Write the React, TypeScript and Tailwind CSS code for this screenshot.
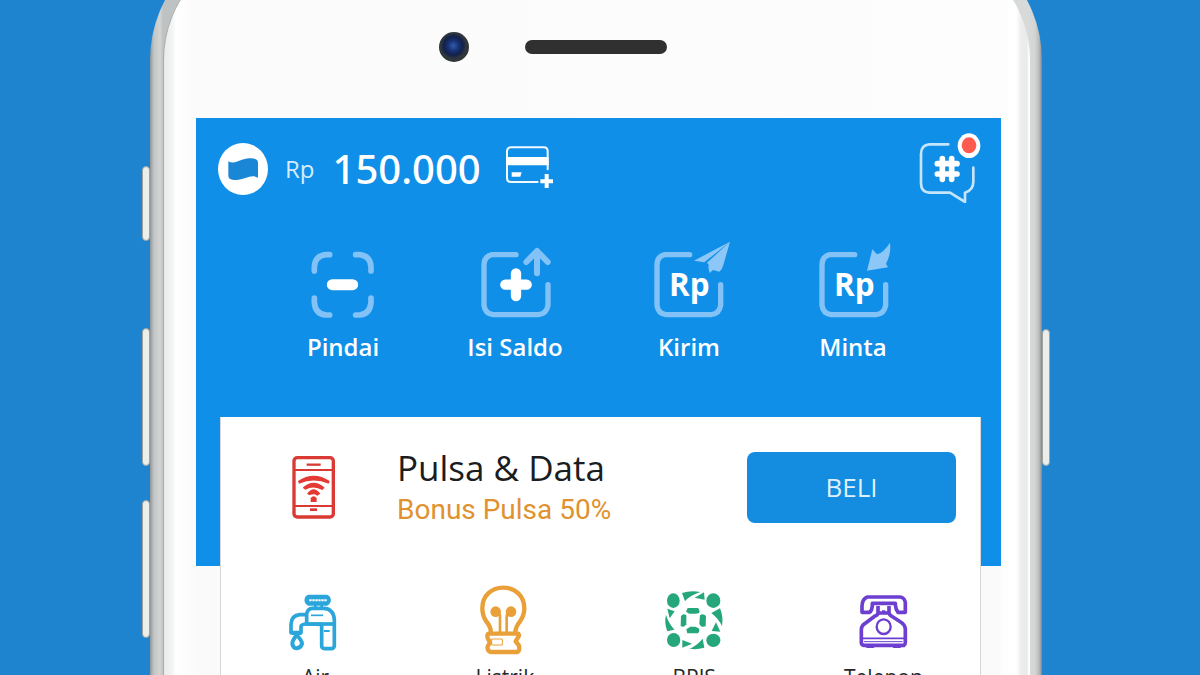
import type { ReactNode } from "react";

const svgBase = "block overflow-visible";

function LogoIcon() {
  return (
    <svg viewBox="0 0 150 156" className="h-[52px] w-[50px]" aria-hidden="true">
      <ellipse cx="75" cy="78" rx="75" ry="78" fill="#fff" />
      <path
        d="M31 55 C52 67 72 44 97 46 Q112 46 117 51 Q120 54 120 60 V104 C99 92 80 111 55 111 Q38 111 33 105 Q31 101 31 96 Z"
        fill="#1a86d6"
      />
    </svg>
  );
}

function AddCardIcon() {
  return (
    <svg viewBox="918 76 144 126" className="h-[42px] w-12" fill="none" aria-hidden="true">
      <path
        d="M1046 146 V92 Q1046 80 1034 80 H936 Q924 80 924 92 V172 Q924 184 936 184 H1016"
        stroke="#f3faff"
        strokeWidth="6"
        strokeLinecap="round"
      />
      <path d="M921 109 H1049 V134 H921 Z" fill="#fff" />
      <path d="M938 155 H968 L964 168 H938 Z" fill="#fff" />
      <path d="M1043 160 V202 M1024 182 H1062" stroke="#fff" strokeWidth="12" />
    </svg>
  );
}

function ChatIcon() {
  return (
    <svg viewBox="117 69 186 210" className="h-[70px] w-[62px]" fill="none" aria-hidden="true">
      <path
        d="M205 103 H148 Q123 105 123 132 V220 Q123 247 148 248 H210 L255 276 V248 Q280 240 280 215 V173"
        stroke="#c6e5fb"
        strokeWidth="8"
        strokeLinecap="round"
        strokeLinejoin="round"
      />
      <path
        d="M187 146 V208 M215 146 V208 M172 161 H231 M172 192 H231"
        stroke="#fff"
        strokeWidth="17"
        strokeLinecap="round"
      />
      <ellipse cx="267" cy="107" rx="34" ry="37" fill="#fff" />
      <ellipse cx="267" cy="106" rx="22" ry="24" fill="#ff5a4f" />
    </svg>
  );
}

function ActionSvg({ viewBox, children }: { viewBox: string; children: ReactNode }) {
  return (
    <svg viewBox={viewBox} className={`${svgBase} size-20`} fill="none" strokeLinecap="round" strokeLinejoin="round" aria-hidden="true">
      {children}
    </svg>
  );
}

function ScanIcon() {
  return (
    <ActionSvg viewBox="39 30 240 240">
      <path
        d="M119 74 H108 Q73 78 73 112 V123 M197 74 H208 Q243 78 243 112 V123 M73 204 V216 Q75 252 108 255 H119 M243 204 V216 Q241 252 208 255 H197"
        stroke="#83c2f6"
        strokeWidth="17"
      />
      <path d="M127 164 H188" stroke="#fff" strokeWidth="33" />
    </ActionSvg>
  );
}

function TopUpIcon() {
  return (
    <ActionSvg viewBox="555 30 240 240">
      <path
        d="M678 74 H606 Q582 79 582 106 V226 Q585 250 609 254 H745 Q770 251 774 226 V164"
        stroke="#83c2f6"
        strokeWidth="16"
      />
      <path d="M741 130 V66 M709 96 L741 63 L773 96" stroke="#83c2f6" strokeWidth="18" />
      <path d="M678 130 V198 M646 164 H710" stroke="#fff" strokeWidth="31" />
    </ActionSvg>
  );
}

function RupiahFrame({ x }: { x: number }) {
  return (
    <g transform={`translate(${x} 0)`}>
      <path
        d="M106 74 H31 Q8 79 8 106 V226 Q11 250 35 254 H170 Q195 251 199 226 V164"
        stroke="#83c2f6"
        strokeWidth="16"
      />
      <text x="105" y="197" textAnchor="middle" fontSize="94" fontWeight="700" fill="#fff">
        Rp
      </text>
    </g>
  );
}

function SendIcon() {
  return (
    <ActionSvg viewBox="57 30 240 240">
      <RupiahFrame x={73} />
      <path
        d="M300 35 L192 92 L223 97 Z M300 35 L231 98 L236 104 Q234 116 239 129 L249 120 L268 125 Q278 117 280 105 Z"
        fill="#8cc7f7"
      />
    </ActionSvg>
  );
}

function RequestIcon() {
  return (
    <ActionSvg viewBox="549 30 240 240">
      <RupiahFrame x={568} />
      <path
        d="M711 122 L727 58 L741 73 Q760 69 780 38 Q784 72 768 101 L774 112 Z"
        fill="#8cc7f7"
      />
    </ActionSvg>
  );
}

function PulsaIcon() {
  return (
    <svg viewBox="276 167 129 189" className="h-[63px] w-[43px] shrink-0" fill="none" stroke="#d93a33" aria-hidden="true">
      <rect x="282" y="172" width="118" height="178" rx="10" strokeWidth="10" />
      <path d="M320 193 H362" strokeWidth="7" />
      <path d="M284 209 H398 M284 317 H398" strokeWidth="6" />
      <path d="M330 328 H351" strokeWidth="8" />
      <g fill="#e53a33" stroke="none">
        <path d="M294 242 Q341 211 389 242 L386 250 Q341 231 297 250 Z" />
        <path d="M308 262 Q341 233 374 262 L367 269 Q341 254 316 268 Z" />
        <path d="M321 280 Q341 253 361 280 L352 286 Q341 278 329 285 Z" />
        <path d="M332 293 Q341 283 350 293 V305 H332 Z" />
      </g>
    </svg>
  );
}

function ServiceSvg({ viewBox, children }: { viewBox: string; children: ReactNode }) {
  return (
    <svg viewBox={viewBox} className={`${svgBase} size-[72px]`} fill="none" strokeLinejoin="round" aria-hidden="true">
      {children}
    </svg>
  );
}

function TapIcon() {
  return (
    <ServiceSvg viewBox="31 42 216 216">
      <g stroke="#2ba6da" strokeWidth="11">
        <path d="M116 77 H172 Q178 80 178 88 Q178 95 170 99 H118 Q110 95 110 88 Q110 80 116 77 Z" fill="#2ba6da" />
        <path d="M119 88 H171" stroke="#fff" strokeWidth="6" strokeDasharray="7 2" />
        <path d="M137 99 V111 M156 99 V111" strokeWidth="8" />
        <path d="M111 159 V128 Q114 113 128 112 H163 Q192 114 194 146 V226 Q192 233 185 233 H165 Q156 232 156 225 V160 Z" />
        <path d="M111 159 H194" />
        <path d="M111 131 H91 Q65 133 64 160 V185 H94 V166 Q96 159 111 159" />
        <path d="M124 133 H160" strokeWidth="5" />
        <path d="M163 180 H180" strokeWidth="6" />
        <path d="M81 192 Q67 210 68 219 Q71 232 82 232 Q95 230 97 218 Q97 209 81 192 Z" strokeWidth="12" />
        <path d="M66 187 H95" strokeWidth="10" />
      </g>
    </ServiceSvg>
  );
}

function BulbIcon() {
  return (
    <ServiceSvg viewBox="597 42 216 216">
      <g stroke="#eaa038" strokeWidth="13">
        <path d="M663 185 Q663 168 648 150 Q637 134 637 112 C637 73 665 50 700 50 C736 50 763 75 763 112 Q763 134 750 151 Q736 168 736 185" />
        <path d="M657 188 H745 Q749 193 744 199 L737 211 L747 224 Q750 239 742 243 H662 Q651 240 653 226 L660 215 L653 201 Q650 190 657 188 Z" />
        <path d="M690 183 V134 Q689 127 684 125 M710 183 V134 Q711 127 716 125" strokeWidth="8" />
        <path d="M665 204 H697 V222 H665 Z" strokeWidth="3" />
      </g>
      <g fill="#eaa038">
        <circle cx="677" cy="122" r="16" />
        <circle cx="723" cy="122" r="16" />
      </g>
    </ServiceSvg>
  );
}

function BpjsIcon() {
  return (
    <ServiceSvg viewBox="56 42 216 216">
      <g fill="#25a77b">
        <ellipse cx="102" cy="89" rx="19" ry="22" />
        <ellipse cx="222" cy="89" rx="21" ry="22" />
        <ellipse cx="103" cy="207" rx="20" ry="21" />
        <ellipse cx="222" cy="208" rx="21" ry="20" />
        <path d="M128 66 Q153 58 183 63 Q150 74 137 91 Z" />
        <path d="M194 64 L196 86 L166 80 Z" />
        <path d="M242 112 Q253 137 248 166 Q240 145 216 126 Z" />
        <path d="M243 182 L217 180 L230 154 Z" />
        <path d="M195 230 Q170 237 151 233 Q172 224 190 203 Z" />
        <path d="M129 230 L129 207 L158 218 Z" />
        <path d="M84 181 Q74 155 80 131 Q87 155 105 176 Z" />
        <path d="M84 113 L106 121 L91 142 Z" />
        <path d="M145 111 H176 Q183 119 179 126 L170 128 H150 L140 122 Z" />
        <path d="M144 187 H176 Q183 180 178 172 L168 167 H153 L141 175 Z" />
        <path d="M125 135 Q132 126 141 133 V160 Q135 171 124 165 Z" />
        <path d="M200 135 Q191 126 182 133 L180 158 Q184 171 199 166 Z" />
      </g>
    </ServiceSvg>
  );
}

function PhoneIcon() {
  return (
    <ServiceSvg viewBox="625 42 216 216">
      <g stroke="#6d3fd0" strokeWidth="11">
        <path d="M686 78 H783 Q797 79 800 94 V124 H778 Q771 115 770 101 V97 H701 V105 Q699 120 693 124 H670 V105 Q671 83 686 78 Z" />
        <path d="M718 105 V126 Q718 132 709 135 L678 158 Q667 165 668 179 V215 Q669 222 676 223 H796 Q800 221 800 214 V173 Q798 160 786 153 L758 135 Q752 131 751 125 V105" />
        <path d="M671 202 H799" strokeWidth="5" />
        <path d="M676 212 H792" strokeWidth="3" />
        <ellipse cx="735" cy="167" rx="21" ry="22" strokeWidth="7" />
        <path d="M715 126 H754 M735 118 V126" strokeWidth="10" />
      </g>
      <path d="M679 223 H711 L705 231 H684 Z M760 223 H792 L785 231 H764 Z" fill="#6d3fd0" />
    </ServiceSvg>
  );
}

const actions = [
  { label: "Pindai", icon: <ScanIcon /> },
  { label: "Isi Saldo", icon: <TopUpIcon /> },
  { label: "Kirim", icon: <SendIcon /> },
  { label: "Minta", icon: <RequestIcon /> },
];

const services = [
  { label: "Air", icon: <TapIcon /> },
  { label: "Listrik", icon: <BulbIcon /> },
  { label: "BPJS", icon: <BpjsIcon /> },
  { label: "Telepon", icon: <PhoneIcon /> },
];

const sideKey = "w-2 shrink-0 rounded-sm border border-[#9da19f] bg-[#eceee9]";

export default function App() {
  return (
    <main className="grid h-screen grid-cols-[150px_1fr_158px] overflow-hidden bg-[#1f84d0] font-['Open_Sans','Noto_Sans',sans-serif]">
      <div className="flex flex-col items-end pt-[166px]">
        <div className={`${sideKey} h-[75px]`} />
        <div className={`${sideKey} mt-[87px] h-[138px]`} />
        <div className={`${sideKey} mt-[34px] h-[138px]`} />
      </div>

      <div className="-mt-[67px] min-h-[120vh] rounded-t-[127px] bg-[linear-gradient(to_right,#8f9697,#c3c6c6_4px,#d3d5d5_10px,#bfc2c2_13px,#d8dada_calc(100%-13px),#d3d5d4_calc(100%-7px),#b9bcbb_calc(100%-3px),#858989)] pt-3 pr-3 pl-[13px]">
        <div className="min-h-full rounded-t-[115px] border-l border-[#a9adac] bg-[linear-gradient(to_right,#e9ebeb,#f3f4f4_8px,#ffffff_12px,#fbfbfb_32px,#fdfdfd_calc(100%-30px),#ffffff_calc(100%-14px),#eceeed_calc(100%-9px),#e9ebea_calc(100%-3px),#ffffff_calc(100%-1px))] pr-[29px] pl-8">
          <div className="flex h-[173px] items-center gap-14 pt-[30px] pl-[243px]">
            <div className="size-[30px] shrink-0 rounded-full bg-[radial-gradient(circle_at_48%_46%,#2f5bb0_0%,#173170_25%,#12204a_42%,#30383c_58%,#252b2e_100%)]" />
            <div className="h-[14px] w-[142px] rounded-full bg-[#2f302f]" />
          </div>

          <div className="bg-[#fafafa]">
            <section className="bg-[#0f8fe8] pt-4 pb-51 text-white">
              <header className="flex h-[70px] items-center pr-5 pl-[22px]">
                <LogoIcon />
                <span className="ml-[17px] text-2xl text-[#d5ecfd]">Rp</span>
                <strong className="ml-[18px] font-['Noto_Sans',sans-serif] text-[40px] font-medium">150.000</strong>
                <button type="button" aria-label="Tambah kartu" className="ml-6 pb-1">
                  <AddCardIcon />
                </button>
                <button type="button" aria-label="Pesan" className="ml-auto pb-0.5">
                  <ChatIcon />
                </button>
              </header>
              <nav className="mt-9 grid grid-cols-[172fr_172fr_176fr_152fr] pr-[72px] pl-[61px]">
                {actions.map(({ label, icon }) => (
                  <button key={label} type="button" className="flex flex-col items-center gap-3">
                    {icon}
                    <span className="text-2xl leading-[30px] font-semibold whitespace-nowrap">{label}</span>
                  </button>
                ))}
              </nav>
            </section>

            <section className="-mt-[149px] mr-5 ml-6 min-h-[400px] border-x border-[#d5d7d8] bg-white pt-7">
              <div className="flex items-center pr-6 pl-[71px]">
                <PulsaIcon />
                <div className="ml-[62px] flex-1">
                  <h2 className="text-[35px] leading-[46px] text-[#1b1d20]">Pulsa &amp; Data</h2>
                  <p className="font-[Roboto,sans-serif] text-[28px] leading-[38px] text-[#df922f]">Bonus Pulsa 50%</p>
                </div>
                <button type="button" className="h-[71px] w-[209px] rounded-lg bg-[#148ce0] text-[26px] text-[#dff0fc]">
                  BELI
                </button>
              </div>
              <nav className="mt-14 grid grid-cols-4 pr-0.5">
                {services.map(({ label, icon }) => (
                  <a key={label} href={`#${label.toLowerCase()}`} className="flex flex-col items-center gap-1.5">
                    {icon}
                    <span className="text-[21px] leading-7 text-[#26282c]">{label}</span>
                  </a>
                ))}
              </nav>
            </section>
          </div>
        </div>
      </div>

      <div className="flex flex-col items-start pt-[329px]">
        <div className={`${sideKey} h-[137px]`} />
      </div>
    </main>
  );
}
